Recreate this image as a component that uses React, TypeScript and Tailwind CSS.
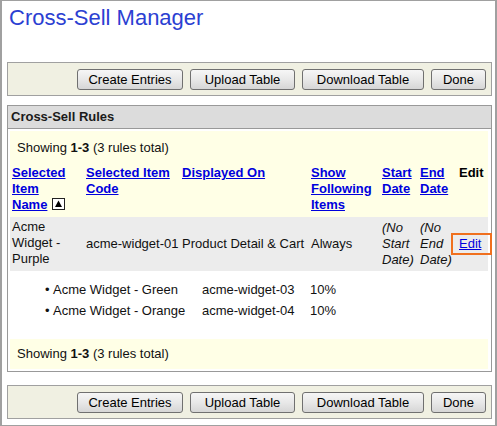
const btn =
  "h-[21px] rounded-[3px] border border-[#707070] bg-gradient-to-b from-[#f6f6f6] via-[#e8e8e8] to-[#d6d6d6] text-[13px] leading-none text-black";

function Toolbar() {
  return (
    <div className="flex h-[34px] items-center justify-end gap-[7px] border border-[#a0a0a0] bg-[#f0f0e2] pr-[5px]">
      <button className={`${btn} w-[106px]`}>Create Entries</button>
      <button className={`${btn} w-[105px]`}>Upload Table</button>
      <button className={`${btn} w-[122px]`}>Download Table</button>
      <button className={`${btn} w-[55px]`}>Done</button>
    </div>
  );
}

function SortUp() {
  return (
    <svg width="13" height="12" viewBox="0 0 13 12" className="ml-[1px] inline-block align-[-1px]">
      <rect x="0.5" y="0.5" width="12" height="11" fill="#fff" stroke="#222" />
      <path d="M6.5 2.5 L10 9 L3 9 Z" fill="#000" />
    </svg>
  );
}

const th = "px-[2px] pt-[3px] pb-[4px] text-left align-top font-bold";
const link = "text-[#0000dd] underline";
const td = "px-[2px] align-middle";

export default function App() {
  return (
    <div className="h-[426px] w-[497px] border-x-2 border-y border-[#a0a0a0] bg-white pl-[5px] pr-[3px] font-['Liberation_Sans',Arial,sans-serif] text-[13px] leading-[16px] text-[#111]">
      <h1 className="pt-[4px] pl-[2px] text-[22px] leading-[25px] text-[#2b40d2]">
        Cross-Sell Manager
      </h1>

      <div className="mt-[32px]">
        <Toolbar />
      </div>

      <div className="mt-[9px] border border-[#999]">
        <div className="h-[23px] border-b border-[#999] bg-[#dcdcdc] pl-[3px] pt-[3px] font-bold text-[#1a1a1a]">
          Cross-Sell Rules
        </div>
        <div className="px-[2px] pt-[2px] pb-[2px]">
          <table className="w-[478px] table-fixed border-collapse">
            <colgroup>
              <col className="w-[74px]" />
              <col className="w-[96px]" />
              <col className="w-[129px]" />
              <col className="w-[71px]" />
              <col className="w-[38px]" />
              <col className="w-[39px]" />
              <col className="w-[31px]" />
            </colgroup>
            <tbody>
              <tr className="bg-[#ffffe6]">
                <td colSpan={7} className="pl-[7px] pt-[9px] pb-[6px]">
                  Showing <b>1-3</b> (3 rules total)
                </td>
              </tr>
              <tr className="bg-[#ffffe6]">
                <th className={th}>
                  <a className={link}>Selected</a>
                  <br />
                  <a className={link}>Item</a>
                  <br />
                  <a className={link}>Name</a> <SortUp />
                </th>
                <th className={th}>
                  <a className={link}>Selected Item Code</a>
                </th>
                <th className={th}>
                  <a className={link}>Displayed On</a>
                </th>
                <th className={th}>
                  <a className={link}>Show Following Items</a>
                </th>
                <th className={th}>
                  <a className={link}>Start Date</a>
                </th>
                <th className={th}>
                  <a className={link}>End Date</a>
                </th>
                <th className={`${th} text-black`}>Edit</th>
              </tr>
              <tr className="bg-[#ececec]">
                <td className="px-[2px] pt-[2px] pb-[4px] align-middle">Acme Widget - Purple</td>
                <td className={`${td} whitespace-nowrap`}>acme-widget-01</td>
                <td className={`${td} whitespace-nowrap`}>Product Detail &amp; Cart</td>
                <td className={td}>Always</td>
                <td className={`${td} italic`}>(No Start Date)</td>
                <td className={`${td} italic`}>(No End Date)</td>
                <td className={td}>
                  <span className="relative inline-block">
                    <a className={link}>Edit</a>
                    <span className="absolute -left-[8px] -top-[3px] h-[22px] w-[41px] border-2 border-[#f0701e]" />
                  </span>
                </td>
              </tr>
              <tr className="bg-white">
                <td colSpan={7} className="h-[68px] align-top pt-[11px]">
                  <div className="grid grid-cols-[192px_108px_1fr] gap-y-[5px]">
                    <div className="pl-[35px]">
                      <span className="inline-block w-[8px]">•</span>Acme Widget - Green
                    </div>
                    <div>acme-widget-03</div>
                    <div>10%</div>
                    <div className="pl-[35px]">
                      <span className="inline-block w-[8px]">•</span>Acme Widget - Orange
                    </div>
                    <div>acme-widget-04</div>
                    <div>10%</div>
                  </div>
                </td>
              </tr>
              <tr className="bg-[#ffffe6]">
                <td colSpan={7} className="pl-[7px] pt-[7px] pb-[7px]">
                  Showing <b>1-3</b> (3 rules total)
                </td>
              </tr>
            </tbody>
          </table>
        </div>
      </div>

      <div className="mt-[13px]">
        <Toolbar />
      </div>
    </div>
  );
}
